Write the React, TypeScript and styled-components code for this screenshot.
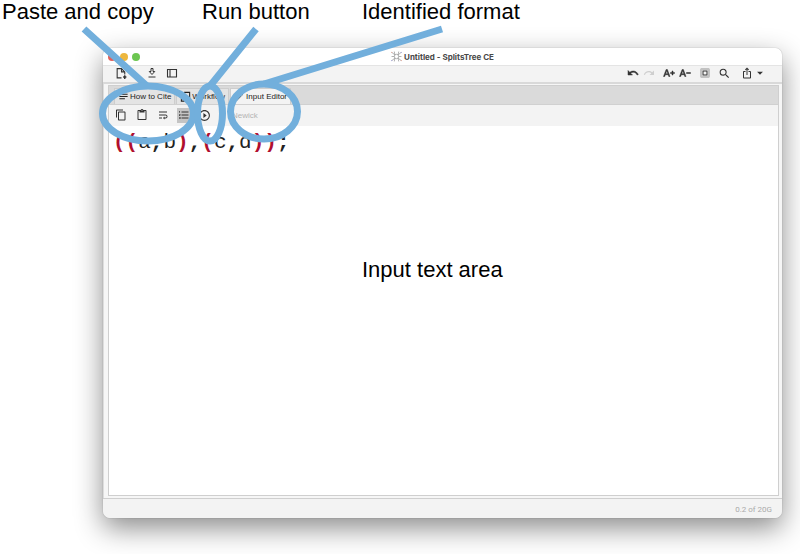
import React from "react";
import styled, { createGlobalStyle } from "styled-components";
import {
  MdContentCopy,
  MdOutlineContentPaste,
  MdWrapText,
  MdFormatListNumbered,
  MdPlayCircleOutline,
  MdSelectAll,
  MdSearch,
  MdIosShare,
  MdArrowDropDown,
  MdTextIncrease,
  MdTextDecrease,
  MdUndo,
  MdRedo,
  MdEdit,
  MdNotes,
} from "react-icons/md";

const GlobalStyle = createGlobalStyle`
  * { box-sizing: border-box; }
  body { margin: 0; background: #fff; overflow: hidden; }
  button { font: inherit; color: inherit; }
`;

const Page = styled.main`
  position: relative;
  min-height: 100vh;
  display: flex;
  flex-direction: column;
  font-family: "Liberation Sans", Arial, sans-serif;
  color: #000;
`;

const Captions = styled.header`
  display: grid;
  grid-template-columns: 200px 160px 1fr;
  height: 48px;
  padding-left: 2px;
  font-size: 22px;
  line-height: 24px;
  white-space: nowrap;
`;

const AppWindow = styled.section`
  flex: 1;
  display: flex;
  flex-direction: column;
  margin: 0 18px 36px 103px;
  border-radius: 7px;
  background: #f3f3f3;
  box-shadow: 0 0 1px rgba(0, 0, 0, 0.45), 0 10px 28px rgba(0, 0, 0, 0.46);
  overflow: hidden;
`;

const TitleBar = styled.div`
  display: grid;
  grid-template-columns: 1fr auto 1fr;
  align-items: center;
  height: 17px;
  padding: 0 5px;
  background: #fff;
`;

const Lights = styled.div`
  display: flex;
  gap: 4px;
`;

const Light = styled.button<{ $color: string }>`
  width: 8px;
  height: 8px;
  padding: 0;
  border: 0;
  border-radius: 50%;
  background: ${(p) => p.$color};
`;

const Title = styled.h1`
  display: flex;
  align-items: center;
  gap: 2px;
  margin: 0;
  font: 700 8px/16px Inter, sans-serif;
  color: #484848;
`;

const MainBar = styled.div`
  display: flex;
  align-items: center;
  justify-content: space-between;
  height: 19px;
  padding: 0 18px 2px 12px;
  border-top: 1px solid #e4e4e4;
  border-bottom: 2px solid #d9d9d9;
  color: #333;
`;

const Group = styled.div<{ $gap: number }>`
  display: flex;
  align-items: center;
  gap: ${(p) => p.$gap}px;
`;

const IconButton = styled.button<{ $active?: boolean; $narrow?: boolean; $bold?: boolean }>`
  display: flex;
  align-items: center;
  justify-content: center;
  width: ${(p) => (p.$narrow ? 8 : 13)}px;
  height: 15px;
  padding: 0;
  border: 0;
  background: ${(p) => (p.$active ? "#c4c4c4" : "transparent")};

  svg {
    flex: none;
  }

  path:not([fill="none"]) {
    ${(p) => p.$bold && "stroke-width: 1;"}
  }

  &:disabled {
    color: #cfcfcf;
  }
`;

const Content = styled.div`
  flex: 1;
  display: flex;
  flex-direction: column;
  padding: 1px 3px 2px 4px;
  border-left: 1px solid #ddd;
  background: #f6f6f6;
`;

const Pane = styled.div`
  flex: 1;
  display: flex;
  flex-direction: column;
  border: 1px solid #cfcfcf;
  background: #fff;
`;

const TabBar = styled.div`
  display: flex;
  align-items: flex-end;
  gap: 1px;
  height: 19px;
  padding-left: 5px;
  background: #dadada;
  border-bottom: 1px solid #d0d0d0;
`;

const Tab = styled.button<{ $selected?: boolean }>`
  display: flex;
  align-items: center;
  height: 16px;
  padding: 0 3px 0 1px;
  border: 1px solid #cdcdcd;
  border-bottom: 0;
  background: ${(p) => (p.$selected ? "#f3f3f3" : "#e4e4e4")};
  font-size: 8px;
  color: #222;
  white-space: nowrap;
`;

const TabIcon = styled.span`
  display: flex;
  justify-content: center;
  width: 14px;
`;

const EditorBar = styled.div`
  display: flex;
  align-items: center;
  height: 21px;
  padding: 0 0 1px 5px;
  gap: 8px;
  background: #f3f3f3;
  color: #333;
`;

const Format = styled.output`
  margin-left: 13px;
  font-size: 8px;
  color: #b4b4b4;
`;

const Editor = styled.div`
  flex: 1;
  padding: 4px;
  outline: 0;
  font: 21px/26px "Liberation Mono", monospace;
  color: #222;
`;

const Token = styled.span<{ $paren: boolean }>`
  font-weight: 700;
  color: ${(p) => (p.$paren ? "#b00f2e" : "#222")};
`;

const StatusBar = styled.footer`
  height: 20px;
  padding: 0 10px;
  border-top: 1px solid #cfcfcf;
  background: #f3f3f3;
  font: 8px/22px Roboto, sans-serif;
  text-align: right;
  color: #aaa;
`;

const AreaCaption = styled.p`
  position: absolute;
  left: 362px;
  top: 258px;
  margin: 0;
  font-size: 22px;
  line-height: 24px;
  pointer-events: none;
`;

const Callouts = styled.svg`
  position: absolute;
  left: 0;
  top: 0;
  pointer-events: none;
`;

const NewFileIcon = () => (
  <svg width="13" height="13" viewBox="0 0 24 24" fill="none" stroke="currentColor">
    <path d="M12 20H4V3h8l6 6v5M12 3v6h6" strokeWidth="2" />
    <path d="M18 15v7M15 18.500h6" strokeWidth="2.600" />
  </svg>
);

const SaveIcon = () => (
  <svg width="12" height="12" viewBox="0 0 24 24" fill="none" stroke="currentColor" strokeWidth="2">
    <path d="M10 3h4v6h3.500L12 15 6.500 9H10zM5 20h14" />
  </svg>
);

const PanelIcon = () => (
  <svg width="12" height="12" viewBox="0 0 24 24" fill="none" stroke="currentColor" strokeWidth="2.2">
    <path d="M3 5h18v15H3zM8 5v15" />
  </svg>
);

const FlowIcon = () => (
  <svg width="11" height="11" viewBox="0 0 24 24" fill="none" stroke="currentColor" strokeWidth="2.4">
    <path d="M9 3h12v15H10M3 17h6v5H3zM6 17v-6h5" />
  </svg>
);

const NetworkIcon = () => (
  <svg width="11" height="11" viewBox="0 0 20 20" fill="none" stroke="#999" strokeWidth="1.4">
    <path d="M7 7l3-1 3 1 1 3-1 3-3 1-3-1-1-3zM7 7L2 3M7 7L6 1M13 7l5-4M13 7l1-6M13 13l5 4M13 13l1 6M7 13l-5 4M7 13l-1 6M6 10H1M14 10h5" />
    <path d="M2 3L1 2M18 17l1 1" stroke="#c97968" strokeWidth="2" />
    <path d="M18 3l1-1M2 17l-1 1" stroke="#7778bd" strokeWidth="2" />
  </svg>
);

const newick = "((a,b),(c,d));";

export default function App() {
  return (
    <>
      <GlobalStyle />
      <Page>
        <Captions>
          <span>Paste and copy</span>
          <span>Run button</span>
          <span>Identified format</span>
        </Captions>

        <AppWindow>
          <TitleBar>
            <Lights>
              <Light $color="#e2605a" aria-label="Close" />
              <Light $color="#edb73e" aria-label="Minimize" />
              <Light $color="#6cc651" aria-label="Zoom" />
            </Lights>
            <Title>
              <NetworkIcon />
              Untitled - SplitsTree CE
            </Title>
          </TitleBar>

          <MainBar>
            <Group $gap={17}>
              <IconButton aria-label="New"><NewFileIcon /></IconButton>
              <Group $gap={7}>
                <IconButton aria-label="Save"><SaveIcon /></IconButton>
                <IconButton aria-label="Toggle side panel"><PanelIcon /></IconButton>
              </Group>
            </Group>
            <Group $gap={9}>
              <Group $gap={7}>
                <Group $gap={3}>
                  <IconButton $bold aria-label="Undo"><MdUndo size={12} /></IconButton>
                  <IconButton disabled aria-label="Redo"><MdRedo size={12} /></IconButton>
                </Group>
                <Group $gap={3}>
                  <IconButton $bold aria-label="Increase font size"><MdTextIncrease size={12} /></IconButton>
                  <IconButton $bold aria-label="Decrease font size"><MdTextDecrease size={12} /></IconButton>
                </Group>
                <IconButton aria-label="Select all"><MdSelectAll size={12} /></IconButton>
                <IconButton aria-label="Find"><MdSearch size={13} /></IconButton>
              </Group>
              <Group $gap={3}>
                <IconButton aria-label="Export"><MdIosShare size={12} /></IconButton>
                <IconButton $narrow aria-label="Export options"><MdArrowDropDown size={14} /></IconButton>
              </Group>
            </Group>
          </MainBar>

          <Content>
            <Pane>
              <TabBar role="tablist">
                <Tab role="tab" aria-selected={false}>
                  <TabIcon><MdNotes size={11} /></TabIcon>
                  How to Cite
                </Tab>
                <Tab role="tab" aria-selected={false}>
                  <TabIcon><FlowIcon /></TabIcon>
                  Workflow
                </Tab>
                <Tab role="tab" aria-selected $selected>
                  <TabIcon><MdEdit size={10} /></TabIcon>
                  Input Editor
                </Tab>
              </TabBar>
              <EditorBar>
                <IconButton aria-label="Copy"><MdContentCopy size={12} /></IconButton>
                <IconButton aria-label="Paste"><MdOutlineContentPaste size={12} /></IconButton>
                <IconButton aria-label="Wrap text"><MdWrapText size={12} /></IconButton>
                <IconButton $active aria-pressed aria-label="Line numbers"><MdFormatListNumbered size={12} /></IconButton>
                <IconButton aria-label="Run"><MdPlayCircleOutline size={13} /></IconButton>
                <Format>Newick</Format>
              </EditorBar>
              <Editor
                contentEditable
                suppressContentEditableWarning
                role="textbox"
                aria-multiline
                aria-label="Input text"
                spellCheck={false}
              >
                {[...newick].map((ch, i) =>
                  "(),;".includes(ch) ? (
                    <Token key={i} $paren={ch === "(" || ch === ")"}>{ch}</Token>
                  ) : (
                    ch
                  )
                )}
              </Editor>
            </Pane>
          </Content>

          <StatusBar>0.2 of 20G</StatusBar>
        </AppWindow>

        <AreaCaption>Input text area</AreaCaption>

        <Callouts width="460" height="160" viewBox="0 0 460 160" fill="none" stroke="#72afdc" strokeWidth="7" aria-hidden>
          <path d="M84 29L147 86M256 29L210 86M442 29L264 84" />
          <ellipse cx="148" cy="113.500" rx="45.500" ry="27.500" />
          <ellipse cx="210" cy="113.500" rx="12.500" ry="27.500" />
          <ellipse cx="264" cy="111.500" rx="33.500" ry="27.500" />
        </Callouts>
      </Page>
    </>
  );
}
